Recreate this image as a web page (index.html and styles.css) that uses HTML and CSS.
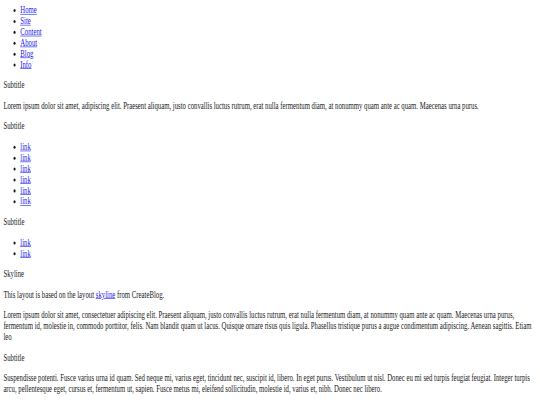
FILE: index.html
```html
<!DOCTYPE html>
<html>
<head>
<meta charset="utf-8">
<title>Skyline</title>
<link rel="stylesheet" href="styles.css">
</head>
<body>
<div class="page">
  <ul class="nav">
    <li><a href="#">Home</a></li>
    <li><a href="#">Site</a></li>
    <li><a href="#">Content</a></li>
    <li><a href="#">About</a></li>
    <li><a href="#">Blog</a></li>
    <li><a href="#">Info</a></li>
  </ul>
  <p class="subtitle">Subtitle</p>
  <p>Lorem ipsum dolor sit amet, adipiscing elit. Praesent aliquam, justo convallis luctus rutrum, erat nulla fermentum diam, at nonummy quam ante ac quam. Maecenas urna purus.</p>
  <p class="subtitle">Subtitle</p>
  <ul class="links">
    <li><a href="#">link</a></li>
    <li><a href="#">link</a></li>
    <li><a href="#">link</a></li>
    <li><a href="#">link</a></li>
    <li><a href="#">link</a></li>
    <li><a href="#">link</a></li>
  </ul>
  <p class="subtitle">Subtitle</p>
  <ul class="links">
    <li><a href="#">link</a></li>
    <li><a href="#">link</a></li>
  </ul>
  <p class="subtitle">Skyline</p>
  <p>This layout is based on the layout <a href="#">skyline</a> from CreateBlog.</p>
  <p>Lorem ipsum dolor sit amet, consectetuer adipiscing elit. Praesent aliquam, justo convallis luctus rutrum, erat nulla fermentum diam, at nonummy quam ante ac quam. Maecenas urna purus, fermentum id, molestie in, commodo porttitor, felis. Nam blandit quam ut lacus. Quisque ornare risus quis ligula. Phasellus tristique purus a augue condimentum adipiscing. Aenean sagittis. Etiam leo</p>
  <p class="subtitle">Subtitle</p>
  <p>Suspendisse potenti. Fusce varius urna id quam. Sed neque mi, varius eget, tincidunt nec, suscipit id, libero. In eget purus. Vestibulum ut nisl. Donec eu mi sed turpis feugiat feugiat. Integer turpis arcu, pellentesque eget, cursus et, fermentum ut, sapien. Fusce metus mi, eleifend sollicitudin, molestie id, varius et, nibh. Donec nec libero.</p>
  <p class="subtitle">Subtitle</p>
  <p>Lorem ipsum dolor sit amet, consectetuer adipiscing elit.</p>
</div>
</body>
</html>
```
FILE: styles.css
```css
html {
  overflow: hidden;
}
body {
  margin: 0;
  background: #ffffff;
}
.page {
  width: 1264px;
  padding: 8px;
  font-family: "Liberation Serif", "Times New Roman", serif;
  font-size: 16px;
  color: #1a1a1a;
  transform: scale(0.4219, 0.605);
  transform-origin: 0 0;
}
.page p {
  margin: 16px 0;
}
.page ul {
  margin: 16px 0;
  padding-left: 40px;
}
.page ul.nav {
  margin-top: 0;
}
.page a {
  color: #1a1aee;
}
```
